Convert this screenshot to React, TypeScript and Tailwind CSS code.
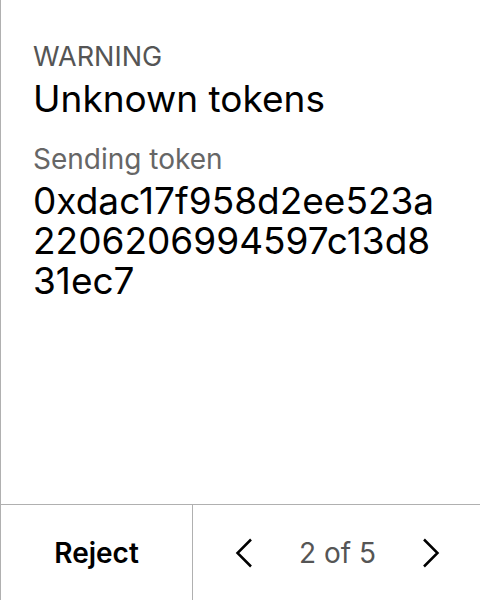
import React from "react";

function Chevron({ dir }: { dir: "left" | "right" }) {
  return (
    <svg width="18" height="30" viewBox="0 0 18 30" fill="none">
      {dir === "left" ? (
        <path d="M16 1.5L2.5 15 16 28.5" stroke="#000" strokeWidth="2.5" />
      ) : (
        <path d="M2 1.5L15.5 15 2 28.5" stroke="#000" strokeWidth="2.5" />
      )}
    </svg>
  );
}

export default function App() {
  return (
    <div
      className="w-[480px] h-[600px] flex flex-col bg-white border-l border-[#b0b0b0]"
      style={{ fontFamily: "Inter, 'Liberation Sans', sans-serif" }}
    >
      {/* Body */}
      <div className="flex-1 flex flex-col pl-[32px] pr-4 pt-[41px]">
        <div className="text-[27px] leading-[32px] text-[#555]">WARNING</div>
        <div className="text-[37px] leading-[44px] text-black mt-[4px]">Unknown tokens</div>
        <div className="text-[28px] leading-[34px] text-[#666] mt-[21px]">Sending token</div>
        <div className="text-[37px] leading-[40px] text-black break-all mt-[5px] w-[405px]">
          0xdac17f958d2ee523a2206206994597c13d831ec7
        </div>
      </div>

      {/* Footer */}
      <div className="h-[96px] flex border-t border-[#b0b0b0]">
        <button className="w-[192px] border-r border-[#b0b0b0] flex items-center justify-center text-[28px] font-semibold text-black">
          Reject
        </button>
        <div className="flex-1 flex items-center justify-between pl-[42px] pr-[40px]">
          <Chevron dir="left" />
          <span className="text-[28px] text-[#555]">2 of 5</span>
          <Chevron dir="right" />
        </div>
      </div>
    </div>
  );
}
